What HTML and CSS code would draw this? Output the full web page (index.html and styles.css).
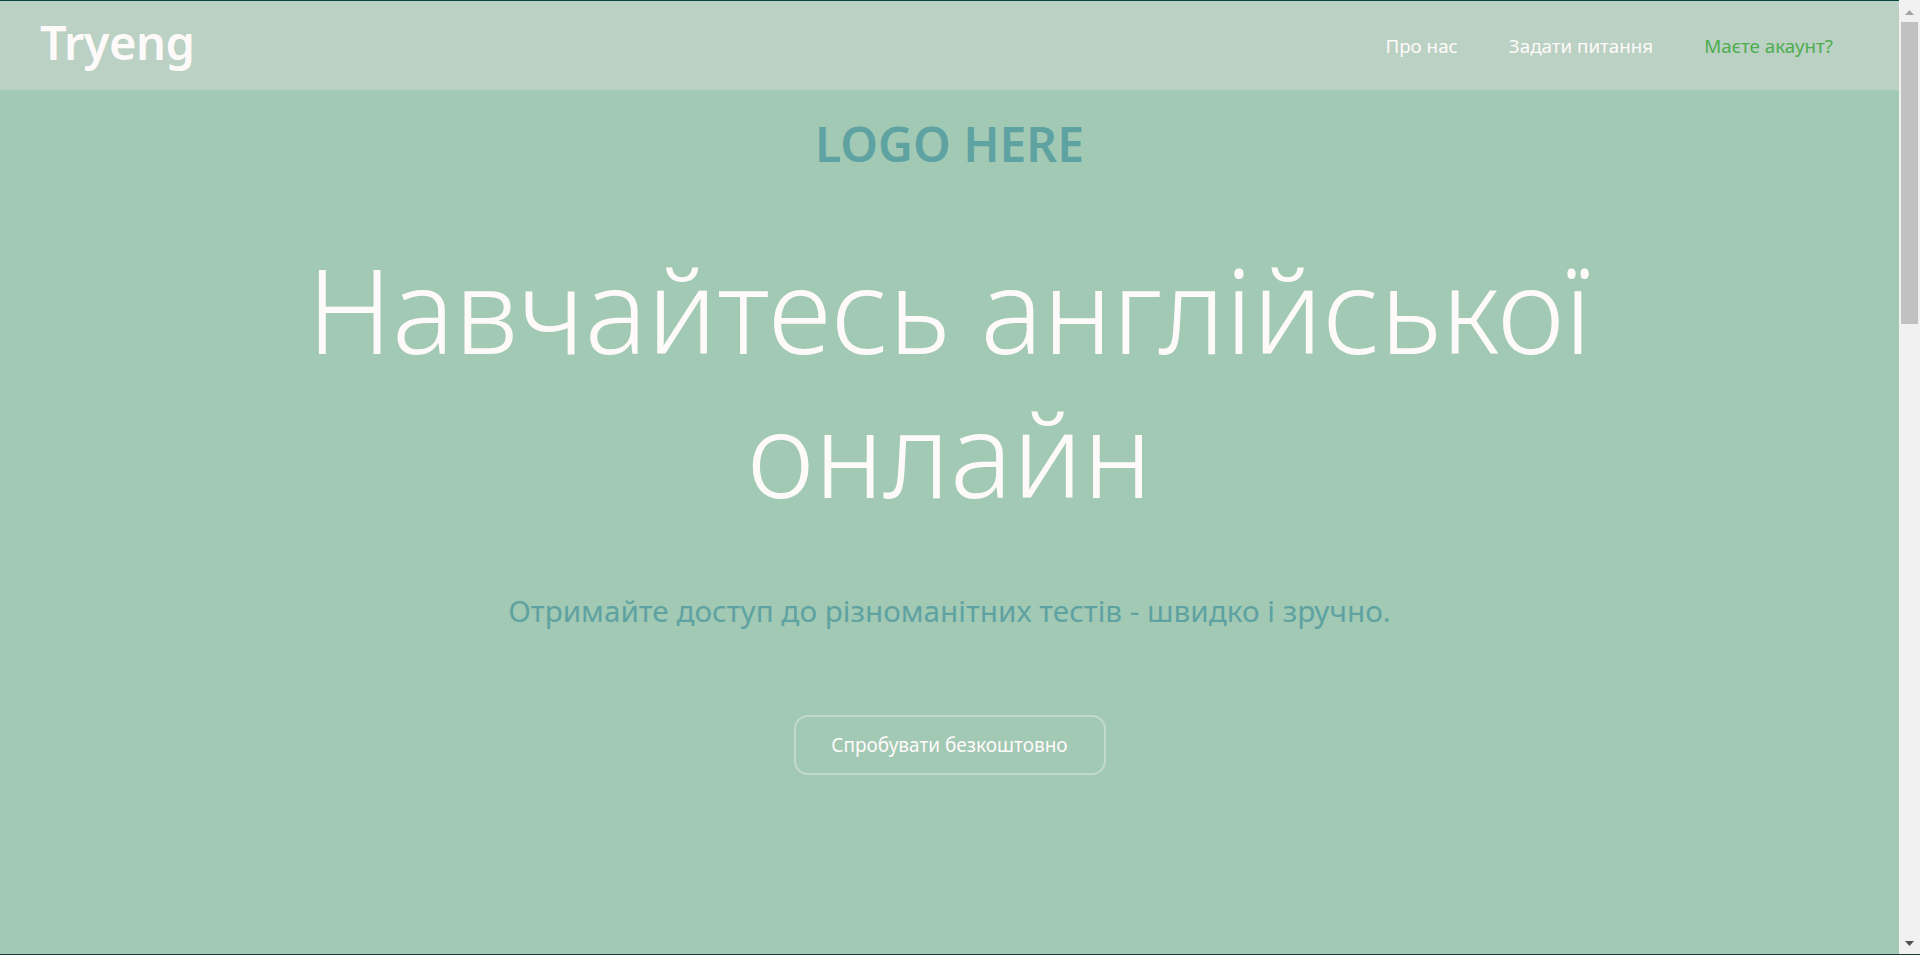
FILE: index.html
```html
<!DOCTYPE html>
<html lang="uk">
<head>
<meta charset="utf-8">
<title>Tryeng</title>
<link rel="stylesheet" href="styles.css">
</head>
<body>
<div class="page">
  <header class="topbar">
    <a class="brand" href="#">Tryeng</a>
    <nav class="nav">
      <a class="nav-link" href="#">Про нас</a>
      <a class="nav-link" href="#">Задати питання</a>
      <a class="nav-link nav-link--accent" href="#">Маєте акаунт?</a>
    </nav>
  </header>
  <main class="hero">
    <div class="hero-logo">LOGO HERE</div>
    <h1 class="hero-title">Навчайтесь англійської<br>онлайн</h1>
    <p class="hero-sub">Отримайте доступ до різноманітних тестів - швидко і зручно.</p>
    <a class="hero-btn" href="#">Спробувати безкоштовно</a>
  </main>
  <section class="more"></section>
</div>
<div class="scrollbar" aria-hidden="true">
  <div class="sb-btn">
    <svg width="21" height="21" viewBox="0 0 21 21"><polygon points="6,15 15,15 10.5,10" fill="#a3a3a3"/></svg>
  </div>
  <div class="sb-track">
    <div class="sb-thumb"></div>
  </div>
  <div class="sb-btn">
    <svg width="21" height="21" viewBox="0 0 21 21"><polygon points="6,7 15,7 10.5,12" fill="#505050"/></svg>
  </div>
</div>
<div class="frame-bottom" aria-hidden="true"></div>
</body>
</html>
```

FILE: styles.css
```css
html, body {
  margin: 0;
  padding: 0;
}
body {
  background: #a2c9b4;
  font-family: "Noto Sans", "Open Sans", sans-serif;
  color: #fffafa;
}
a {
  text-decoration: none;
}
.page {
  margin-right: 21px;
}
.topbar {
  height: 89px;
  border-top: 1px solid #0c4646;
  background: #bad1c4;
  display: flex;
  align-items: center;
  justify-content: space-between;
  padding: 0 66px 0 40px;
}
.brand {
  color: #fffafa;
  font-size: 47px;
  font-weight: 600;
  line-height: 1;
  margin-top: -6px;
  letter-spacing: -0.5px;
}
.nav {
  display: flex;
  gap: 51px;
  align-items: center;
}
.nav-link {
  color: #fffafa;
  font-size: 18.8px;
}
.nav-link--accent {
  color: #4fad4f;
}
.hero {
  display: flex;
  flex-direction: column;
  align-items: center;
  text-align: center;
  padding-bottom: 200px;
}
.hero-logo {
  margin-top: 24px;
  font-size: 48px;
  line-height: 60px;
  font-weight: 600;
  color: #5fa2a2;
}
.hero-title {
  margin: 63px 0 0;
  font-size: 117px;
  line-height: 144px;
  font-weight: 300;
  color: #fffafa;
}
.hero-sub {
  margin: 68px 0 0;
  font-size: 29.7px;
  line-height: 36px;
  color: #5fa2a2;
}
.hero-btn {
  margin-top: 86px;
  box-sizing: border-box;
  width: 312px;
  height: 60px;
  border: 2px solid #c2d9cd;
  border-radius: 14px;
  display: flex;
  align-items: center;
  justify-content: center;
  color: #fffafa;
  font-size: 19px;
}
.more {
  height: 1800px;
}
.scrollbar {
  position: fixed;
  top: 0;
  right: 0;
  width: 21px;
  height: 100vh;
  background: #f1f1f1;
  display: flex;
  flex-direction: column;
}
.sb-btn {
  height: 21px;
  flex: none;
  display: flex;
}
.sb-track {
  flex: 1;
  padding: 1px 2px 0;
}
.sb-thumb {
  height: 302px;
  background: #c1c1c1;
}
.frame-bottom {
  position: fixed;
  left: 0;
  right: 0;
  bottom: 0;
  height: 1px;
  background: #1c3a3a;
}
```
